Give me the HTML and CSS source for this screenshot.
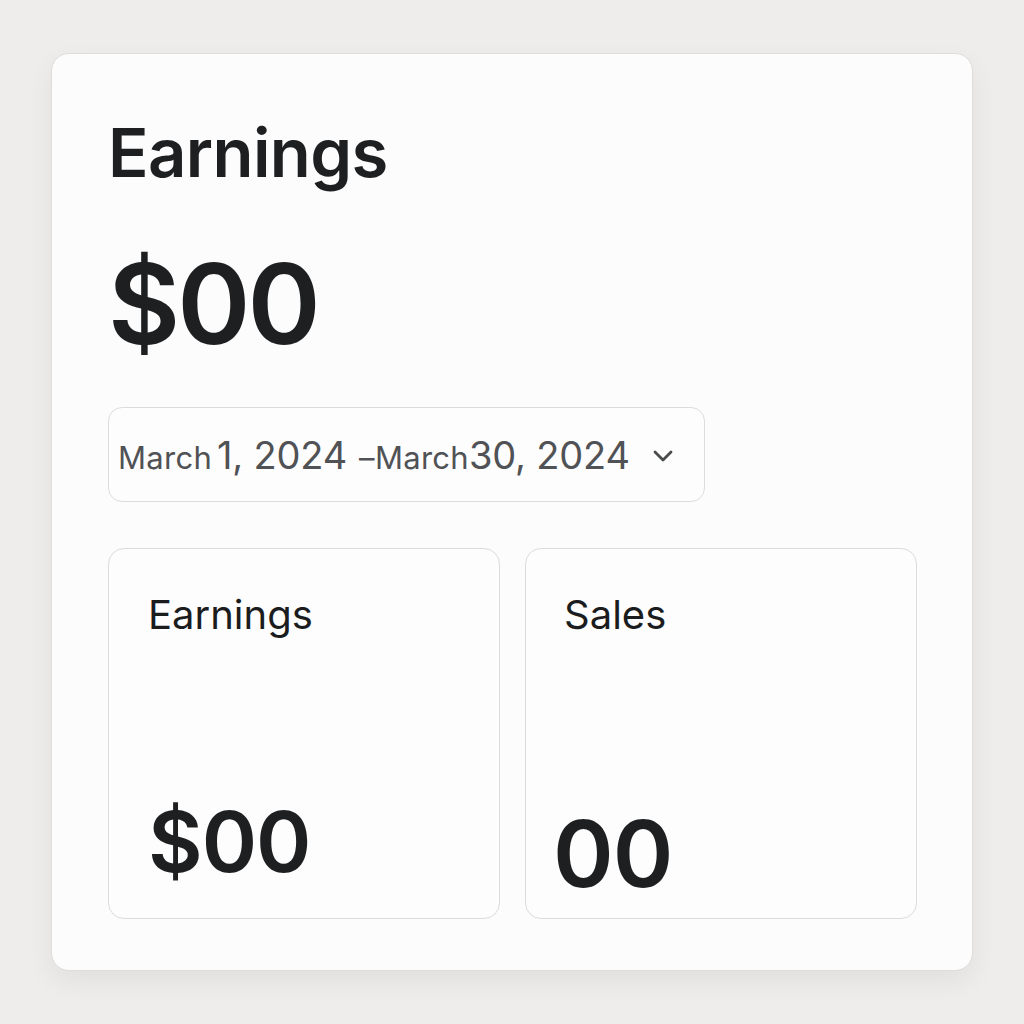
FILE: index.html
```html
<!DOCTYPE html>
<html lang="en">
<head>
<meta charset="utf-8">
<title>Earnings</title>
<link rel="stylesheet" href="styles.css">
</head>
<body>
<main class="card">
  <h1 class="title">Earnings</h1>
  <div class="amount">$00</div>
  <button class="range" type="button">
    <span class="range-text"><span class="sm">March</span><span class="lg gap">1, 2024</span><span class="sm dash">–March</span><span class="lg">30, 2024</span></span>
    <svg class="chev" width="22" height="14" viewBox="0 0 22 14" aria-hidden="true"><path d="M3 3 L11 11 L19 3" fill="none" stroke="#4a4b4d" stroke-width="2.8" stroke-linecap="round" stroke-linejoin="round"/></svg>
  </button>
  <div class="stats">
    <section class="stat stat-earn">
      <div class="stat-label">Earnings</div>
      <div class="stat-value earn-value">$00</div>
    </section>
    <section class="stat stat-sales">
      <div class="stat-label">Sales</div>
      <div class="stat-value sales-value">00</div>
    </section>
  </div>
</main>
</body>
</html>
```
FILE: styles.css
```css
* { box-sizing: border-box; }
html, body { margin: 0; }
body {
  background: #eeedeb;
  padding: 53px 51px;
  font-family: Inter, "Noto Sans", "Liberation Sans", sans-serif;
  color: #1e1f21;
}
.card {
  width: 922px;
  height: 918px;
  background: #fcfcfc;
  border: 1px solid #dedddb;
  border-radius: 18px;
  box-shadow: 0 10px 28px rgba(0,0,0,0.06);
  padding: 65px 56px 0 56px;
  display: flex;
  flex-direction: column;
}
.title {
  margin: 0;
  font-size: 67px;
  line-height: 1;
  font-weight: 600;
  letter-spacing: -0.6px;
  color: #1e1f21;
}
.amount {
  margin-top: 62px;
  font-size: 111px;
  line-height: 1;
  font-weight: 600;
  letter-spacing: -3px;
  color: #1e1f21;
}
.range {
  margin-top: 48px;
  align-self: flex-start;
  width: 597px;
  height: 95px;
  background: #fdfdfd;
  border: 1px solid #dcdcdc;
  border-radius: 14px;
  padding: 0 30px 0 9px;
  display: flex;
  align-items: center;
  justify-content: space-between;
  font-family: inherit;
  cursor: pointer;
}
.range-text {
  color: #505255;
  line-height: 1;
  white-space: nowrap;
}
.sm { font-size: 31px; font-weight: 400; letter-spacing: 0.3px; }
.lg { font-size: 38px; font-weight: 400; letter-spacing: -0.2px; }
.gap { margin-left: 5px; }
.dash { margin-left: 12px; }
.chev { display: block; margin-top: 2px; }
.stats {
  margin-top: 46px;
  display: grid;
  grid-template-columns: 392px 392px;
  gap: 25px;
}
.stat {
  height: 371px;
  background: #fdfdfd;
  border: 1px solid #dcdcdc;
  border-radius: 16px;
  display: flex;
  flex-direction: column;
  padding-top: 46px;
}
.stat-earn { padding-left: 39px; padding-bottom: 34px; }
.stat-sales { padding-left: 38px; padding-bottom: 18px; }
.stat-label {
  font-size: 40px;
  line-height: 1;
  font-weight: 400;
  color: #1b1c1e;
}
.stat-value {
  margin-top: auto;
  line-height: 1;
  color: #1e1f21;
}
.earn-value { font-size: 84px; font-weight: 600; letter-spacing: -1px; }
.sales-value { font-size: 92px; font-weight: 600; margin-left: -11px; letter-spacing: -1px; }
```
